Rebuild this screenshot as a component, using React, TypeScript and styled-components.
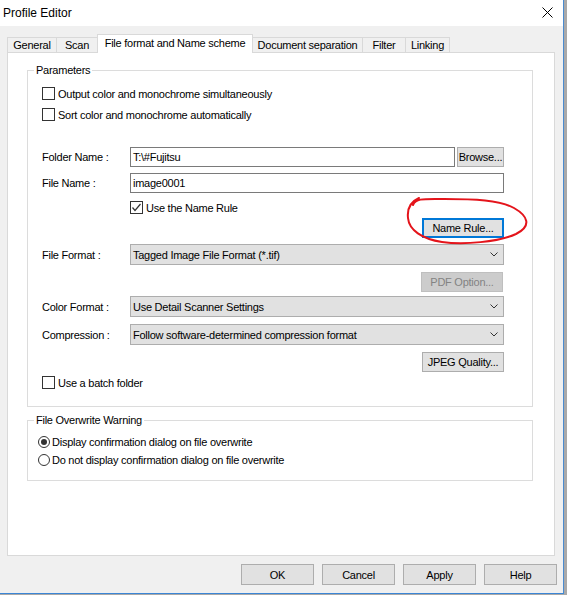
import styled, { createGlobalStyle } from 'styled-components';

const GlobalStyle = createGlobalStyle`
  *, *::before, *::after {
    box-sizing: border-box;
  }

  html, body {
    margin: 0;
    background: #a9a9a9;
  }

  body {
    font-family: 'Liberation Sans', Arial, sans-serif;
    font-size: 11px;
    letter-spacing: -0.25px;
    color: #000;
  }
`;

const Window = styled.div`
  position: relative;
  width: 564px;
  height: 594px;
  display: flex;
  flex-direction: column;
  background: #f0f0f0;
  border-right: 1px solid #4a8bd0;
  border-bottom: 1px solid #3b86d6;
`;

const TitleBar = styled.header`
  height: 26px;
  flex: none;
  display: flex;
  align-items: center;
  justify-content: space-between;
  padding: 0 10px 1px 3px;
  background: #fff;
  font-size: 12px;
  letter-spacing: 0;
`;

const Body = styled.div`
  flex: 1;
  min-height: 0;
  display: flex;
  flex-direction: column;
  padding: 8px 8px 8px 7px;
`;

const TabStrip = styled.div`
  display: flex;
  align-items: flex-end;
  height: 19px;
  margin-bottom: -1px;
  position: relative;
  z-index: 1;
`;

const Tab = styled.div<{ $w: number; $active?: boolean }>`
  width: ${({ $w }) => $w}px;
  height: ${({ $active }) => ($active ? 19 : 15)}px;
  margin-bottom: ${({ $active }) => ($active ? 0 : 1)}px;
  padding-bottom: ${({ $active }) => ($active ? 3 : 0)}px;
  display: flex;
  align-items: center;
  justify-content: center;
  border: 1px solid #d9d9d9;
  border-bottom: none;
  background: ${({ $active }) => ($active ? '#fff' : '#f0f0f0')};
  position: relative;
  z-index: ${({ $active }) => ($active ? 2 : 1)};
  white-space: nowrap;

  & + & {
    margin-left: -1px;
  }
`;

const Panel = styled.section`
  flex: 1;
  min-height: 0;
  background: #fff;
  border: 1px solid #d9d9d9;
  padding: 11px 21px 0 19px;
`;

const Group = styled.fieldset<{ $mt?: number }>`
  margin: ${({ $mt }) => $mt ?? 0}px 0 0;
  padding: 0;
  min-width: 0;
  border: 1px solid #dcdcdc;
`;

const Legend = styled.legend`
  margin-left: 6px;
  padding: 0 2px;
  line-height: 13px;
`;

const GroupBody = styled.div<{ $pad: string }>`
  padding: ${({ $pad }) => $pad};
`;

const Row = styled.div<{ $mt: number }>`
  display: flex;
  align-items: center;
  margin-top: ${({ $mt }) => $mt}px;
`;

const ButtonLine = styled.div<{ $mt: number }>`
  display: flex;
  justify-content: flex-end;
  margin-top: ${({ $mt }) => $mt}px;
`;

const FieldLabel = styled.span`
  width: 88px;
  flex: none;
  white-space: nowrap;
`;

const TextBox = styled.div`
  flex: 1;
  height: 20px;
  display: flex;
  align-items: center;
  padding: 0 2px;
  border: 1px solid #7a7a7a;
  background: #fff;
`;

const Combo = styled.div`
  flex: 1;
  height: 21px;
  display: flex;
  align-items: center;
  justify-content: space-between;
  padding: 0 5px 0 2px;
  border: 1px solid #adadad;
  background: #e1e1e1;
`;

const Button = styled.button<{ $w: number; $h?: number; $focused?: boolean }>`
  width: ${({ $w }) => $w}px;
  height: ${({ $h }) => $h ?? 20}px;
  flex: none;
  padding: 0;
  font: inherit;
  letter-spacing: inherit;
  color: #000;
  background: #e1e1e1;
  border: ${({ $focused }) => ($focused ? '2px solid #0078d7' : '1px solid #adadad')};
  white-space: nowrap;

  &:disabled {
    background: #cccccc;
    border-color: #bfbfbf;
    color: #838383;
  }
`;

const CheckRow = styled.label<{ $mt: number; $ml?: number }>`
  display: flex;
  align-items: center;
  gap: 3px;
  height: 13px;
  margin-top: ${({ $mt }) => $mt}px;
  margin-left: ${({ $ml }) => $ml ?? 0}px;
`;

const Box = styled.span`
  width: 13px;
  height: 13px;
  flex: none;
  display: flex;
  align-items: center;
  justify-content: center;
  border: 1px solid #333;
  background: #fff;
`;

const RadioRow = styled.label<{ $mt: number }>`
  display: flex;
  align-items: center;
  gap: 2px;
  height: 13px;
  margin-top: ${({ $mt }) => $mt}px;
`;

const Radio = styled.span<{ $on?: boolean }>`
  width: 12px;
  height: 12px;
  flex: none;
  display: flex;
  align-items: center;
  justify-content: center;
  border: 1px solid #333;
  border-radius: 50%;
  background: #fff;

  &::after {
    content: '';
    width: 6px;
    height: 6px;
    border-radius: 50%;
    background: ${({ $on }) => ($on ? '#333' : 'transparent')};
  }
`;

const Footer = styled.div`
  display: flex;
  justify-content: flex-end;
  gap: 8px;
  margin: 8px -2px 0 0;
`;

const Scribble = styled.svg`
  position: absolute;
  left: 404px;
  top: 194px;
  width: 130px;
  height: 56px;
  pointer-events: none;
  overflow: visible;
`;

const TABS = [
  { label: 'General', w: 50 },
  { label: 'Scan', w: 42 },
  { label: 'File format and Name scheme', w: 156, active: true },
  { label: 'Document separation', w: 111 },
  { label: 'Filter', w: 44 },
  { label: 'Linking', w: 45 },
];

function Check({ checked }: { checked?: boolean }) {
  return (
    <Box>
      {checked && (
        <svg width="11" height="11" viewBox="0 0 11 11">
          <polyline points="1.5,5.5 4,8.5 9.5,2" fill="none" stroke="#333" strokeWidth="1.2" />
        </svg>
      )}
    </Box>
  );
}

function Chevron() {
  return (
    <svg width="8" height="5" viewBox="0 0 8 5">
      <polyline points="0.5,0.5 4,4 7.5,0.5" fill="none" stroke="#333" strokeWidth="1" />
    </svg>
  );
}

export default function App() {
  return (
    <>
      <GlobalStyle />
      <Window>
        <TitleBar>
          <span>Profile Editor</span>
          <svg width="11" height="11" viewBox="0 0 11 11">
            <path d="M0.5 0.5 L10.5 10.5 M10.5 0.5 L0.5 10.5" stroke="#000" strokeWidth="1" />
          </svg>
        </TitleBar>

        <Body>
          <TabStrip>
            {TABS.map(({ label, w, active }) => (
              <Tab key={label} $w={w} $active={active}>
                {label}
              </Tab>
            ))}
          </TabStrip>

          <Panel>
            <Group>
              <Legend>Parameters</Legend>
              <GroupBody $pad="10px 28px 17px 14px">
                <CheckRow $mt={0}>
                  <Check />
                  Output color and monochrome simultaneously
                </CheckRow>
                <CheckRow $mt={8}>
                  <Check />
                  Sort color and monochrome automatically
                </CheckRow>

                <Row $mt={26}>
                  <FieldLabel>Folder Name :</FieldLabel>
                  <TextBox>T:\#Fujitsu</TextBox>
                  <Button $w={47} style={{ marginLeft: 2 }}>
                    Browse...
                  </Button>
                </Row>
                <Row $mt={6}>
                  <FieldLabel>File Name :</FieldLabel>
                  <TextBox>image0001</TextBox>
                </Row>
                <CheckRow $mt={8} $ml={88}>
                  <Check checked />
                  Use the Name Rule
                </CheckRow>
                <ButtonLine $mt={4}>
                  <Button $w={82} $focused>
                    Name Rule...
                  </Button>
                </ButtonLine>

                <Row $mt={6}>
                  <FieldLabel>File Format :</FieldLabel>
                  <Combo>
                    <span>Tagged Image File Format (*.tif)</span>
                    <Chevron />
                  </Combo>
                </Row>
                <ButtonLine $mt={7}>
                  <Button $w={82} disabled style={{ marginRight: 1 }}>
                    PDF Option...
                  </Button>
                </ButtonLine>
                <Row $mt={4}>
                  <FieldLabel>Color Format :</FieldLabel>
                  <Combo>
                    <span>Use Detail Scanner Settings</span>
                    <Chevron />
                  </Combo>
                </Row>
                <Row $mt={7}>
                  <FieldLabel>Compression :</FieldLabel>
                  <Combo>
                    <span>Follow software-determined compression format</span>
                    <Chevron />
                  </Combo>
                </Row>
                <ButtonLine $mt={7}>
                  <Button $w={82}>JPEG Quality...</Button>
                </ButtonLine>
                <CheckRow $mt={4}>
                  <Check />
                  Use a batch folder
                </CheckRow>
              </GroupBody>
            </Group>

            <Group $mt={7}>
              <Legend>File Overwrite Warning</Legend>
              <GroupBody $pad="8px 10px 14px 10px">
                <RadioRow $mt={0}>
                  <Radio $on />
                  Display confirmation dialog on file overwrite
                </RadioRow>
                <RadioRow $mt={5}>
                  <Radio />
                  Do not display confirmation dialog on file overwrite
                </RadioRow>
              </GroupBody>
            </Group>
          </Panel>

          <Footer>
            <Button $w={73} $h={21}>OK</Button>
            <Button $w={73} $h={21}>Cancel</Button>
            <Button $w={73} $h={21}>Apply</Button>
            <Button $w={73} $h={21}>Help</Button>
          </Footer>
        </Body>

        <Scribble viewBox="0 0 130 56">
          <path
            d="M9 11 C12 4, 20 5, 40 5 C70 5, 96 6, 110 14 C124 22, 128 32, 112 40 C94 48, 60 51, 38 48 C18 45, 5 36, 4 24 C3 15, 6 8, 15 4"
            fill="none"
            stroke="#e4141b"
            strokeWidth="2"
            strokeLinecap="round"
          />
        </Scribble>
      </Window>
    </>
  );
}
